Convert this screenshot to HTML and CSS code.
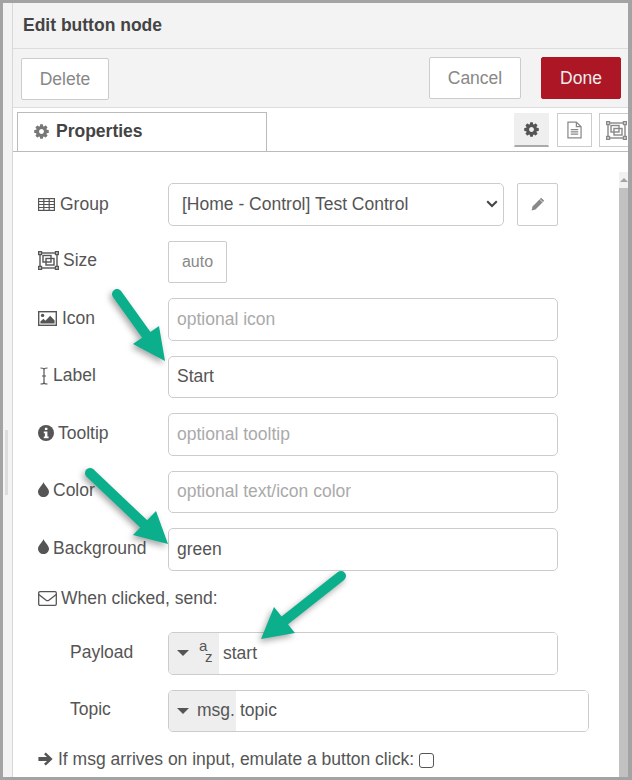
FILE: index.html
```html
<!DOCTYPE html>
<html lang="en">
<head>
<meta charset="utf-8">
<title>Edit button node</title>
<link rel="stylesheet" href="styles.css">
</head>
<body>
<svg class="defs" width="0" height="0">
  <defs>
    <symbol id="i-cog" viewBox="0 0 1792 1792"><path d="M1152 896q0-106-75-181t-181-75-181 75-75 181 75 181 181 75 181-75 75-181zm512-109v222q0 12-8 23t-20 13l-185 28q-19 54-39 91 35 50 107 138 10 12 10 25t-9 23q-27 37-99 108t-94 71q-12 0-26-9l-138-108q-44 23-91 38-16 136-29 186-7 28-36 28h-222q-14 0-24.5-8.5t-11.5-21.5l-28-184q-49-16-90-37l-141 107q-10 9-25 9-14 0-25-11-126-114-165-168-7-10-7-23 0-12 8-23 15-21 51-66.5t54-70.5q-27-50-41-99l-183-27q-13-2-21-12.5t-8-23.5v-222q0-12 8-23t19-13l186-28q14-46 39-92-40-57-107-138-10-12-10-24 0-10 9-23 26-36 98.5-107.5t94.5-71.5q13 0 26 10l138 107q44-23 91-38 16-136 29-186 7-28 36-28h222q14 0 24.5 8.5t11.5 21.5l28 184q49 16 90 37l142-107q9-9 24-9 13 0 25 10 129 119 165 170 7 8 7 22 0 12-8 23-15 21-51 66.5t-54 70.5q26 50 41 98l183 28q13 2 21 12.5t8 23.5z"/></symbol>
    <symbol id="i-size" viewBox="0 0 21 19"><g fill="none" stroke="currentColor" stroke-width="1.4"><rect x="2" y="2" width="17" height="15"/><rect x="5" y="4.5" width="8" height="6.5"/><rect x="8" y="7.5" width="8" height="6.5"/><rect x="0.7" y="0.7" width="2.8" height="2.8" fill="#fff"/><rect x="17.5" y="0.7" width="2.8" height="2.8" fill="#fff"/><rect x="0.7" y="15.5" width="2.8" height="2.8" fill="#fff"/><rect x="17.5" y="15.5" width="2.8" height="2.8" fill="#fff"/></g></symbol>
  </defs>
</svg>
<div class="frame">
  <div class="gutter"><div class="handle"></div></div>
  <main class="tray">
    <header class="tray-title">Edit button node</header>
    <div class="toolbar">
      <button class="btn btn-delete">Delete</button>
      <div class="toolbar-right">
        <button class="btn btn-cancel">Cancel</button>
        <button class="btn btn-done">Done</button>
      </div>
    </div>
    <div class="tabs">
      <div class="tab">
        <svg class="ico ico-tab"><use href="#i-cog"/></svg>
        <span>Properties</span>
      </div>
      <div class="tab-buttons">
        <div class="tab-btn active"><svg class="ico ico-tabbtn"><use href="#i-cog"/></svg></div>
        <div class="tab-btn">
          <svg class="ico-doc" viewBox="0 0 16 19" fill="none" stroke="currentColor" stroke-width="1.3"><path d="M1 1h9l5 5v12H1z"/><path d="M10 1v5h5"/><path d="M4 9h8M4 11.5h8M4 14h8"/></svg>
        </div>
        <div class="tab-btn"><svg class="ico-size-tab"><use href="#i-size"/></svg></div>
      </div>
    </div>
    <div class="body">
      <form class="form">
        <div class="row row-first">
          <label class="lbl">
            <svg class="ico-table" viewBox="0 0 17 13" fill="none" stroke="currentColor" stroke-width="1.2"><rect x=".6" y=".6" width="15.800" height="11.800"/><path d="M.5 3.500h16M.5 6.500h16M.5 9.500h16M5.800 .5v12M11.200 .5v12"/></svg>
            <span>Group</span>
          </label>
          <select class="select"><option>[Home - Control] Test Control</option></select>
          <div class="edit-btn">
            <svg class="ico-pencil" viewBox="0 0 14 14"><path d="M10.200 .8 13.200 3.800 4.500 12.500 .6 13.400 1.500 9.500z" fill="currentColor"/><path d="M8.800 2.300 11.700 5.200" stroke="#fff" stroke-width=".8"/></svg>
          </div>
        </div>
        <div class="row">
          <label class="lbl"><svg class="ico-size"><use href="#i-size"/></svg><span>Size</span></label>
          <div class="size-btn">auto</div>
        </div>
        <div class="row">
          <label class="lbl">
            <svg class="ico-pic" viewBox="0 0 19 15"><rect x=".7" y=".7" width="17.600" height="13.600" fill="none" stroke="currentColor" stroke-width="1.400"/><circle cx="4.600" cy="4.400" r="1.700" fill="currentColor"/><path d="M2.400 12.600v-2l3-2.800 2 2 4.800-5 4.400 4.600v3.200z" fill="currentColor"/></svg>
            <span>Icon</span>
          </label>
          <input class="input" placeholder="optional icon">
        </div>
        <div class="row">
          <label class="lbl">
            <svg class="ico-cursor" viewBox="0 0 8 18" fill="none" stroke="currentColor" stroke-width="1.200"><path d="M.5 1c2 0 3.500 .3 3.500 1.600v12.800C4 16.700 2.500 17 .5 17M7.500 1C5.500 1 4 1.300 4 2.600v12.800C4 16.700 5.500 17 7.500 17M2 9h4"/></svg>
            <span>Label</span>
          </label>
          <input class="input" value="Start">
        </div>
        <div class="row">
          <label class="lbl">
            <svg class="ico-info" viewBox="0 0 16 16"><circle cx="8" cy="8" r="8" fill="currentColor"/><path d="M6.900 2.700h2.500v2.300H6.900zM5.800 6.500h3.600v5h1.200v1.800H5.800v-1.800h1.100V8.300H5.800z" fill="#fff"/></svg>
            <span>Tooltip</span>
          </label>
          <input class="input" placeholder="optional tooltip">
        </div>
        <div class="row">
          <label class="lbl">
            <svg class="ico-drop" viewBox="0 0 11 15"><path d="M5.500 0C6.300 3 11 6.300 11 9.700 11 12.700 8.500 15 5.500 15S0 12.700 0 9.700C0 6.300 4.700 3 5.500 0z" fill="currentColor"/></svg>
            <span>Color</span>
          </label>
          <input class="input" placeholder="optional text/icon color">
        </div>
        <div class="row">
          <label class="lbl">
            <svg class="ico-drop" viewBox="0 0 11 15"><path d="M5.500 0C6.300 3 11 6.300 11 9.700 11 12.700 8.500 15 5.500 15S0 12.700 0 9.700C0 6.300 4.700 3 5.500 0z" fill="currentColor"/></svg>
            <span>Background</span>
          </label>
          <input class="input" value="green">
        </div>
        <div class="row-text row-when">
          <svg class="ico-mail" viewBox="0 0 19 15" fill="none" stroke="currentColor" stroke-width="1.300"><rect x=".7" y=".7" width="17.600" height="13.600" rx="1.200"/><path d="M.8 3.500 7.800 9c1 .8 2.400 .8 3.400 0l7-5.500"/></svg>
          <span>When clicked, send:</span>
        </div>
        <div class="row">
          <label class="lbl lbl-sub"><span>Payload</span></label>
          <div class="typed">
            <div class="typed-prefix prefix-str">
              <span class="caret"></span>
              <span class="az"><span class="az-a">a</span><span class="az-z">z</span></span>
            </div>
            <input class="typed-input" value="start">
          </div>
        </div>
        <div class="row">
          <label class="lbl lbl-sub"><span>Topic</span></label>
          <div class="typed typed-wide">
            <div class="typed-prefix prefix-msg">
              <span class="caret"></span>
              <span>msg.</span>
            </div>
            <input class="typed-input" value="topic">
          </div>
        </div>
        <div class="row-text row-check">
          <svg class="ico-arrow" viewBox="0 0 15 14"><path d="M7.800 .4 14.600 7 7.800 13.600 6 11.800 9 9H.4V5H9L6 2.200z" fill="currentColor"/></svg>
          <span>If msg arrives on input, emulate a button click:</span>
          <input class="check" type="checkbox">
        </div>
      </form>
      <div class="scrollbar">
        <div class="scroll-up"><span class="scroll-tri"></span></div>
        <div class="scroll-thumb"></div>
      </div>
    </div>
  </main>
  <svg class="arrows" viewBox="0 0 632 780" width="632" height="780">
    <g class="arrow-group">
      <path class="shaft" d="M117 294 150 340"/>
      <path class="head" d="M165 361 133 344 159 326z"/>
      <path class="shaft" d="M90 473 147 527"/>
      <path class="head" d="M168 544 133 535 156 511z"/>
      <path class="shaft" d="M341 576 284 621"/>
      <path class="head" d="M261 639 274 607 295 633z"/>
    </g>
  </svg>
</div>
</body>
</html>
```
FILE: styles.css
```css
* { box-sizing: border-box; }
html, body { margin: 0; padding: 0; }
body {
  font-family: "Liberation Sans", Arial, sans-serif;
  font-size: 17.5px;
  color: #555;
  background: #fff;
}
.defs { display: block; height: 0; }
.frame {
  position: relative;
  display: flex;
  width: 632px;
  height: 780px;
  overflow: hidden;
  border: solid #a3a3a3;
  border-width: 3px 4px 3px 3px;
}
.gutter {
  flex: 0 0 10px;
  background: #f3f3f3;
  border-right: 1px solid #d8d8d8;
  padding: 427px 0 0 2px;
}
.handle { width: 3px; height: 65px; background: #dcdcdc; }
.tray { flex: 1 1 0; min-width: 0; display: flex; flex-direction: column; background: #fff; }
.tray-title {
  height: 46px;
  flex: none;
  padding: 12px 0 0 10px;
  font-size: 17.5px;
  line-height: 20px;
  font-weight: 700;
  color: #444;
  background: #f3f3f3;
  border-bottom: 1px solid #ddd;
}
.toolbar {
  height: 59px;
  flex: none;
  display: flex;
  justify-content: space-between;
  align-items: flex-start;
  padding: 8px 7px 0 8px;
  background: #f3f3f3;
  border-bottom: 1px solid #ddd;
}
.toolbar-right { display: flex; gap: 20px; }
.btn {
  height: 42px;
  font: 17.5px "Liberation Sans", Arial, sans-serif;
  border: 1px solid #ccc;
  border-radius: 2px;
  background: #fff;
  color: #888;
  padding: 0;
}
.btn-delete { width: 88px; margin-top: 1px; }
.btn-cancel { width: 92px; }
.btn-done { width: 80px; background: #ad1625; border-color: #ad1625; color: #eee; }
.tabs {
  height: 44px;
  flex: none;
  display: flex;
  align-items: flex-start;
  padding: 4px 0 0 4px;
  border-bottom: 1px solid #bbb;
  overflow: hidden;
}
.tab {
  flex: 0 0 250px;
  height: 40px;
  display: flex;
  align-items: center;
  gap: 6px;
  padding: 0 0 3px 15px;
  font-weight: 700;
  color: #444;
  background: #fff;
  border: 1px solid #bbb;
  border-bottom: 0;
}
.ico { display: block; fill: currentColor; }
.ico-tab { width: 17px; height: 17px; color: #777; }
.tab-buttons { flex: none; display: flex; gap: 8px; margin: 1px 0 0 247px; }
.tab-btn {
  flex: none;
  width: 35px;
  height: 34px;
  display: flex;
  align-items: center;
  justify-content: center;
  border: 1px solid #ccc;
  color: #888;
  background: #fff;
}
.tab-btn + .tab-btn { margin-left: -.5px; }
.tab-btn.active { background: #efefef; color: #555; border-color: #efefef; border-bottom: 2px solid #aaa; }
.ico-tabbtn { width: 17px; height: 17px; }
.ico-doc { width: 15px; height: 18px; }
.ico-size-tab { width: 21px; height: 19px; }
.body { flex: 1 1 0; min-height: 0; display: flex; overflow: hidden; }
.form {
  flex: 1 1 0;
  min-width: 0;
  display: flex;
  flex-direction: column;
  gap: 15px;
  padding: 31px 0 0 25px;
}
.row { display: flex; align-items: center; height: 42.5px; flex: none; }
.lbl {
  flex: 0 0 130px;
  display: flex;
  align-items: center;
  gap: 4px;
  margin-bottom: 2px;
}
.row-first .lbl { margin-bottom: 0; }
.lbl-sub { padding-left: 32px; }
.select {
  appearance: none;
  width: 336px;
  height: 42.5px;
  padding: 0 13px;
  font: 17.5px "Liberation Sans", Arial, sans-serif;
  color: #555;
  background: #fff url("data:image/svg+xml,%3Csvg xmlns='http://www.w3.org/2000/svg' width='12' height='8' viewBox='0 0 12 8'%3E%3Cpath d='M1.200 1.200 6 6l4.800-4.800' fill='none' stroke='%23444' stroke-width='2'/%3E%3C/svg%3E") no-repeat 317px 50%;
  border: 1px solid #ccc;
  border-radius: 5px;
}
.edit-btn {
  width: 41px;
  height: 42.5px;
  margin-left: 13px;
  display: flex;
  align-items: center;
  justify-content: center;
  border: 1px solid #ccc;
  border-radius: 2px;
  color: #888;
}
.ico-pencil { width: 14px; height: 14px; }
.size-btn {
  width: 59px;
  height: 42px;
  display: flex;
  align-items: center;
  justify-content: center;
  font-size: 16px;
  color: #888;
  border: 1px solid #ccc;
  border-radius: 2px;
}
.input {
  width: 390px;
  height: 42.5px;
  padding: 0 8px;
  font: 17.5px "Liberation Sans", Arial, sans-serif;
  color: #555;
  background: #fff;
  border: 1px solid #ccc;
  border-radius: 5px;
  outline: 0;
}
.input::placeholder { color: #aaa; opacity: 1; }
.ico-table { width: 17px; height: 13px; flex: none; margin-right: 1px; }
.ico-size { width: 21px; height: 19px; flex: none; }
.ico-pic { width: 19px; height: 15px; flex: none; margin-right: 1px; }
.ico-cursor { width: 8px; height: 18px; flex: none; margin-left: 2px; margin-right: 1px; }
.ico-info { width: 16px; height: 16px; flex: none; }
.ico-drop { width: 11px; height: 15px; flex: none; margin-top: -3px; }
.ico-mail { width: 19px; height: 15px; flex: none; }
.ico-arrow { width: 15px; height: 14px; flex: none; }
.row-text { display: flex; align-items: center; gap: 4px; height: 25px; flex: none; }
.row-when { margin-bottom: 6.5px; }
.row-check { height: 24px; gap: 5px; }
.typed {
  width: 390px;
  height: 42.5px;
  display: flex;
  overflow: hidden;
  border: 1px solid #ccc;
  border-radius: 5px;
}
.typed-wide { width: 421px; }
.typed-prefix {
  flex: none;
  display: flex;
  align-items: center;
  background: #eee;
  color: #555;
  padding-left: 8px;
}
.prefix-str { width: 50px; }
.prefix-msg { width: 67px; gap: 8px; }
.caret {
  width: 0;
  height: 0;
  flex: none;
  border: solid transparent;
  border-width: 6px 6px 0;
  border-top-color: #555;
}
.az { position: relative; display: block; width: 30px; height: 30px; font-size: 15px; line-height: 8px; }
.az-a { position: absolute; left: 10px; top: 4px; }
.az-z { position: absolute; left: 16px; top: 15px; }
.typed-input {
  flex: 1 1 0;
  min-width: 0;
  border: 0;
  outline: 0;
  padding: 0 4px;
  font: 17.5px "Liberation Sans", Arial, sans-serif;
  color: #555;
  background: #fff;
}
.check {
  appearance: none;
  width: 15px;
  height: 15px;
  margin: 2px 0 0 0;
  border: 1px solid #555;
  border-radius: 3px;
  background: #fff;
}
.scrollbar { flex: 0 0 7px; margin-top: 20px; display: flex; flex-direction: column; background: #f1f1f1; }
.scroll-up { height: 16px; flex: none; padding: 6px 0 0 1px; }
.scroll-tri {
  display: block;
  width: 0;
  height: 0;
  border: solid transparent;
  border-width: 0 4px 4px;
  border-bottom-color: #a3a3a3;
}
.scroll-thumb { flex: 1 1 0; background: #c1c1c1; }
.arrows { position: absolute; left: -3px; top: -3px; pointer-events: none; }
.arrow-group { filter: drop-shadow(-2px 3px 3px rgba(0, 0, 0, .35)); }
.shaft { fill: none; stroke: #0caf8b; stroke-width: 10; stroke-linecap: round; }
.head { fill: #0caf8b; }
```
